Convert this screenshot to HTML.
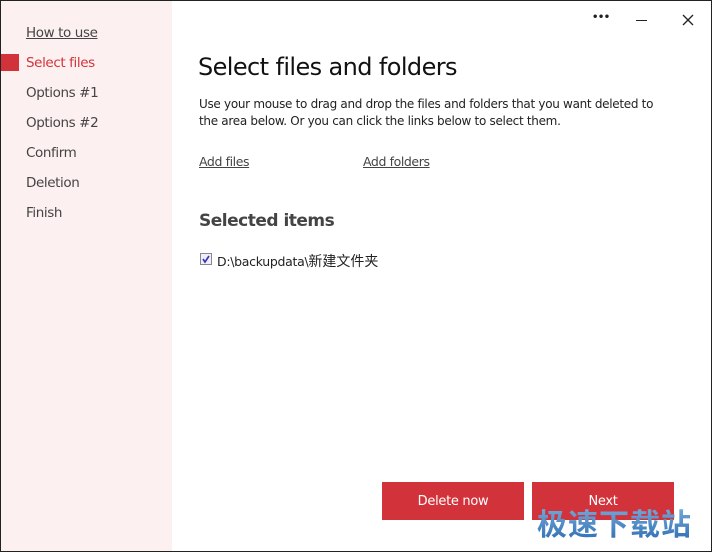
<!DOCTYPE html>
<html><head><meta charset="utf-8"><style>
*{margin:0;padding:0;box-sizing:border-box}
body{width:712px;height:552px;overflow:hidden;background:#fff;font-family:"DejaVu Sans","Liberation Sans","Noto Sans CJK SC",sans-serif;position:relative}
.frame{position:absolute;inset:0;border:1px solid #222}
.side{position:absolute;left:1px;top:1px;width:171px;height:550px;background:#fdf0f0}
.nav{position:absolute;left:26px;font-size:13.5px;color:#444;letter-spacing:-0.4px}
.abs{position:absolute}
.btn{position:absolute;top:482px;height:38px;width:142px;background:#d2333b;color:#fff;font-size:13px;text-align:center;line-height:40px;letter-spacing:-0.3px}
</style></head><body>
<div class="side"></div>
<div class="abs" style="left:1px;top:54px;width:18px;height:17px;background:#d2333b"></div>
<div class="nav" style="top:25px;text-decoration:underline">How to use</div>
<div class="nav" style="top:55px;color:#d2333b">Select files</div>
<div class="nav" style="top:85px">Options #1</div>
<div class="nav" style="top:115px">Options #2</div>
<div class="nav" style="top:145px">Confirm</div>
<div class="nav" style="top:175px">Deletion</div>
<div class="nav" style="top:205px">Finish</div>
<div class="abs" style="left:592px;top:12px;font-size:10px;color:#222;font-weight:bold;letter-spacing:-0.5px">•••</div>
<div class="abs" style="left:636px;top:20px;width:11px;height:1px;background:#222"></div>
<svg class="abs" style="left:682px;top:14px" width="12" height="12"><path d="M1 1L11 11M11 1L1 11" stroke="#222" stroke-width="1.3"/></svg>
<div class="abs" style="left:198px;top:53px;font-size:24px;color:#111;letter-spacing:-0.6px">Select files and folders</div>
<div class="abs" style="left:199px;top:96px;font-size:12px;color:#222;line-height:17px;width:465px;letter-spacing:-0.3px">Use your mouse to drag and drop the files and folders that you want deleted to the area below. Or you can click the links below to select them.</div>
<div class="abs" style="left:199px;top:154px;font-size:12.5px;color:#444;text-decoration:underline;letter-spacing:-0.4px">Add files</div>
<div class="abs" style="left:363px;top:154px;font-size:12.5px;color:#444;text-decoration:underline;letter-spacing:-0.4px">Add folders</div>
<div class="abs" style="left:199px;top:211px;font-size:17px;color:#444;font-weight:bold;letter-spacing:-0.5px">Selected items</div>
<div class="abs" style="left:200px;top:253px;width:12px;height:12px;border:1px solid #888;background:#eef"><svg width="10" height="10" style="position:absolute;left:0;top:0"><path d="M2 5L4 8L8 2" stroke="#33a" stroke-width="1.6" fill="none"/></svg></div>
<div class="abs" style="left:217px;top:251px;font-size:12.5px;color:#222;letter-spacing:-0.3px">D:\backupdata\<span style="font-family:'Noto Sans CJK SC',sans-serif;font-size:14px;letter-spacing:0">新建文件夹</span></div>
<div class="btn" style="left:382px">Delete now</div>
<div class="btn" style="left:532px">Next</div>
<div class="abs" style="left:537px;top:502px;font-size:30px;font-weight:bold;font-family:'Noto Sans CJK SC',sans-serif;background:linear-gradient(#7fb3e0,#2f6db3);-webkit-background-clip:text;color:transparent;letter-spacing:1px;line-height:40px">极速下载站</div>
<div class="frame"></div>
</body></html>
